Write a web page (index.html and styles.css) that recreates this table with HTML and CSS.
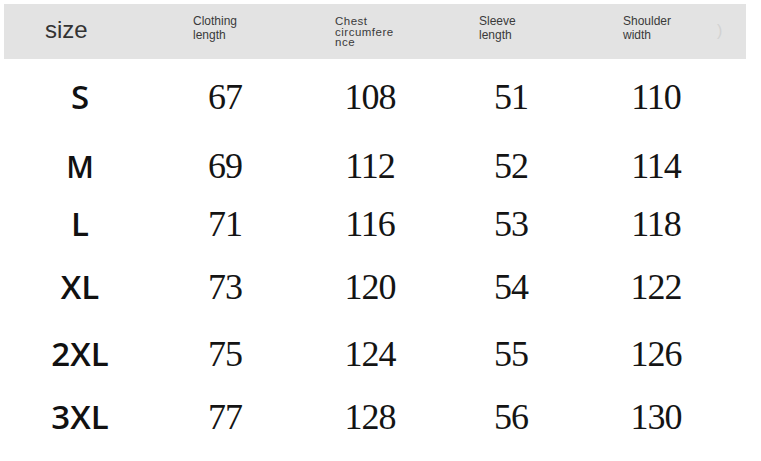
FILE: index.html
```html
<!DOCTYPE html>
<html lang="en">
<head>
<meta charset="utf-8">
<title>Size chart</title>
<link rel="stylesheet" href="styles.css">
</head>
<body>
<div class="chart">
  <div class="head">
    <div class="h h-size">size</div>
    <div class="h h-two">Clothing<br>length</div>
    <div class="h h-three">Chest<br>circumfere<br>nce</div>
    <div class="h h-two">Sleeve<br>length</div>
    <div class="h h-two h-last">Shoulder<br>width<span class="ghost">)</span></div>
  </div>
  <div class="table">
    <div class="sz">S</div><div class="num">67</div><div class="num">108</div><div class="num">51</div><div class="num">110</div>
    <div class="sz sz-m">M</div><div class="num">69</div><div class="num">112</div><div class="num">52</div><div class="num">114</div>
    <div class="sz">L</div><div class="num">71</div><div class="num">116</div><div class="num">53</div><div class="num">118</div>
    <div class="sz">XL</div><div class="num">73</div><div class="num">120</div><div class="num">54</div><div class="num">122</div>
    <div class="sz">2XL</div><div class="num">75</div><div class="num">124</div><div class="num">55</div><div class="num">126</div>
    <div class="sz">3XL</div><div class="num">77</div><div class="num">128</div><div class="num">56</div><div class="num">130</div>
  </div>
</div>
</body>
</html>
```

FILE: styles.css
```css
html, body {
  margin: 0;
  padding: 0;
  background: #ffffff;
}

.chart {
  width: 761px;
  height: 461px;
  overflow: hidden;
}

.head {
  margin: 4px 15px 0 4px;
  height: 55px;
  background: #e3e3e3;
  display: grid;
  grid-template-columns: 41px 148px 142px 144px 144px 1fr;
  font-family: "Liberation Sans", Arial, sans-serif;
  color: #3a3a3a;
}

.h {
  align-self: start;
}

.h-size {
  grid-column: 2;
  font-size: 24px;
  line-height: 24px;
  padding-top: 14px;
  color: #333333;
}

.h-two {
  font-size: 12px;
  line-height: 14px;
  padding-top: 10px;
}

.h-three {
  font-size: 11.5px;
  line-height: 10.5px;
  letter-spacing: 0.5px;
  padding-top: 12px;
}

.h-last {
  position: relative;
}

.ghost {
  position: absolute;
  left: 94px;
  top: 20px;
  font-size: 16px;
  color: #d2d2d2;
}

.table {
  margin-top: 20px;
  display: grid;
  grid-template-columns: 160px 130px 160px 122px 168px;
  grid-template-rows: 70px 57px 63px 67px 63px 40px;
  align-items: baseline;
  justify-items: center;
}

.sz {
  font-family: "Open Sans", "Noto Sans", sans-serif;
  font-weight: 600;
  font-size: 33px;
  line-height: 35px;
  color: #111111;
}

.sz-m {
  font-size: 30px;
}

.num {
  font-family: "Liberation Serif", "Times New Roman", serif;
  font-size: 36px;
  line-height: 35px;
  letter-spacing: -1px;
  color: #141414;
}
```
